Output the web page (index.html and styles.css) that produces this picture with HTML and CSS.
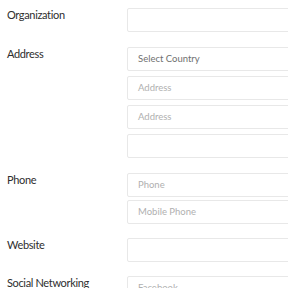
FILE: index.html
```html
<!DOCTYPE html>
<html>
<head>
<meta charset="utf-8">
<link rel="stylesheet" href="styles.css">
</head>
<body>
<form class="form">
  <div class="row">
    <div class="label">Organization</div>
    <div class="fields">
      <div class="input"></div>
    </div>
  </div>
  <div class="row">
    <div class="label">Address</div>
    <div class="fields">
      <div class="input select">Select Country</div>
      <div class="input ph">Address</div>
      <div class="input ph">Address</div>
      <div class="input"></div>
    </div>
  </div>
  <div class="row">
    <div class="label">Phone</div>
    <div class="fields tight">
      <div class="input ph">Phone</div>
      <div class="input ph">Mobile Phone</div>
    </div>
  </div>
  <div class="row">
    <div class="label">Website</div>
    <div class="fields">
      <div class="input"></div>
    </div>
  </div>
  <div class="row">
    <div class="label">Social Networking</div>
    <div class="fields">
      <div class="input ph">Facebook</div>
    </div>
  </div>
</form>
</body>
</html>
```
FILE: styles.css
```css
html, body {
  margin: 0;
  padding: 0;
  background: #fff;
  overflow: hidden;
}
.form {
  width: 420px;
  padding: 8px 0 0 7px;
  display: flex;
  flex-direction: column;
  gap: 15px;
  font-family: "Lato", "Open Sans", sans-serif;
}
.row {
  display: flex;
}
.row:nth-child(n+4) {
  margin-top: -1px;
}
.label {
  width: 120px;
  flex: none;
  font-size: 11px;
  line-height: 14px;
  letter-spacing: -0.35px;
  color: #2e2e2e;
}
.fields {
  width: 200px;
  display: flex;
  flex-direction: column;
  gap: 5px;
}
.fields.tight {
  gap: 3px;
}
.input {
  box-sizing: border-box;
  height: 24px;
  border: 1px solid #e8e8e8;
  border-radius: 2px;
  padding-left: 10px;
  font-size: 9.5px;
  line-height: 22px;
  color: #b0b0b0;
}
.input.select {
  color: #707070;
}
```
